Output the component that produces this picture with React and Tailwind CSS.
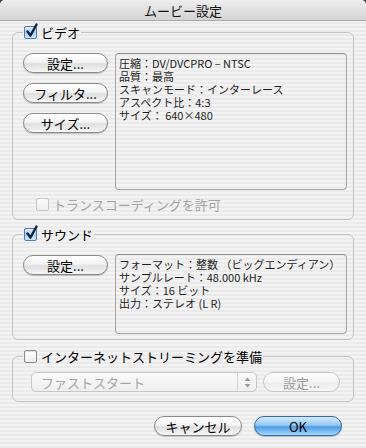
const stripes =
  "bg-[repeating-linear-gradient(180deg,#f3f3f3_0px,#f3f3f3_2px,#eaeaea_2px,#eaeaea_4px)]";

const Check = ({ checked, disabled }) => (
  <span className="relative inline-block w-[13px] h-[13px] shrink-0">
    <span
      className={`absolute inset-0 rounded-[2px] border ${
        checked
          ? "border-[#4d7cb4] bg-[linear-gradient(180deg,#e2effc_0%,#a9cff2_50%,#cfe6fb_100%)]"
          : disabled
          ? "border-[#c6c6c6] bg-[linear-gradient(180deg,#fbfbfb,#eeeeee)]"
          : "border-[#8a8a8a] bg-[linear-gradient(180deg,#ffffff,#ececec)] shadow-[inset_0_1px_1px_rgba(0,0,0,0.15)]"
      }`}
    />
    {checked && (
      <svg
        className="absolute left-[1px] top-[-3px]"
        width="14"
        height="15"
        viewBox="0 0 14 15"
      >
        <path
          d="M2.5 8.5 L5.5 12.5 L11.5 1.5"
          fill="none"
          stroke="#10233f"
          strokeWidth="2.4"
          strokeLinecap="round"
          strokeLinejoin="round"
        />
      </svg>
    )}
  </span>
);

const AquaButton = ({ children, className = "", disabled, primary }) => (
  <button
    className={`h-[20px] rounded-full border text-[13px] leading-none flex items-center justify-center ${
      primary
        ? "border-[#3a6aa3] bg-[linear-gradient(180deg,#d4eafd_0%,#94c8f3_45%,#4c9be5_55%,#a5dafc_100%)] text-black shadow-[0_1px_1px_rgba(0,0,0,0.25)]"
        : disabled
        ? "border-[#c4c4c4] bg-[linear-gradient(180deg,#fdfdfd_0%,#f4f4f4_50%,#ebebeb_55%,#f7f7f7_100%)] text-[#9c9c9c]"
        : "border-[#8a8a8a] bg-[linear-gradient(180deg,#ffffff_0%,#f3f3f3_45%,#dedede_55%,#f6f6f6_100%)] text-black shadow-[0_1px_1px_rgba(0,0,0,0.2)]"
    } ${className}`}
  >
    {children}
  </button>
);

const Legend = ({ checked, children, className = "" }) => (
  <legend className="px-[1px]">
    <span className="flex items-center gap-[4px] h-[14px]">
      <Check checked={checked} />
      <span className={`text-[13px] leading-none text-black ${className}`}>
        {children}
      </span>
    </span>
  </legend>
);

const InfoBox = ({ lines, className = "" }) => (
  <div
    className={`w-[232px] rounded-[4px] border border-[#a4a4a4] border-t-[#8e8e8e] pl-[3px] pt-[3px] text-[11px] leading-[13px] text-[#1e1e1e] ${className}`}
  >
    {lines.map((l) => (
      <div key={l} className="whitespace-nowrap">
        {l}
      </div>
    ))}
  </div>
);

export default function App() {
  return (
    <div className="w-[366px] h-[448px] bg-[#3d463d] font-['Noto_Sans_CJK_JP','Noto_Sans',sans-serif]">
      <div className={`w-full h-full rounded-t-[5px] overflow-hidden ${stripes}`}>
        {/* タイトルバー */}
        <div className="h-[21px] border-b border-[#a9a9a9] bg-[linear-gradient(180deg,#ededed,#d3d3d3)] flex items-center justify-center">
          <span className="text-[13px] leading-none text-[#111]">ムービー設定</span>
        </div>

        {/* ビデオ */}
        <fieldset className="mx-[12px] mt-[4px] border border-[#c3c3c3] rounded-[6px] pl-[10px] pr-[6px] pb-[8px]">
          <Legend checked>ビデオ</Legend>
          <div className="mt-[14px] flex gap-[7px]">
            <div className="w-[85px] flex flex-col gap-[10px]">
              <AquaButton>設定...</AquaButton>
              <AquaButton>フィルタ...</AquaButton>
              <AquaButton>サイズ...</AquaButton>
            </div>
            <InfoBox
              className="h-[137px]"
              lines={[
                "圧縮：DV/DVCPRO – NTSC",
                "品質：最高",
                "スキャンモード：インターレース",
                "アスペクト比：4:3",
                "サイズ： 640×480",
              ]}
            />
          </div>
          <div className="mt-[7px] pl-[13px] h-[14px] flex items-center gap-[4px]">
            <Check disabled />
            <span className="text-[13px] leading-none text-[#a3a3a3]">
              トランスコーディングを許可
            </span>
          </div>
        </fieldset>

        {/* サウンド */}
        <fieldset className="mx-[12px] mt-[7px] border border-[#c3c3c3] rounded-[6px] pl-[10px] pr-[6px] pb-[5px]">
          <Legend checked>サウンド</Legend>
          <div className="mt-[13px] flex items-start gap-[7px]">
            <div className="w-[85px] mt-[1px]">
              <AquaButton className="w-full">設定...</AquaButton>
            </div>
            <InfoBox
              className="h-[80px]"
              lines={[
                "フォーマット：整数 （ビッグエンディアン）",
                "サンプルレート：48.000 kHz",
                "サイズ：16 ビット",
                "出力：ステレオ (L R)",
              ]}
            />
          </div>
        </fieldset>

        {/* ストリーミング */}
        <fieldset className="mx-[12px] mt-[9px] border border-[#c3c3c3] rounded-[6px] pl-[10px] pr-[6px] pb-[9px]">
          <Legend className="text-[12.3px]">インターネットストリーミングを準備</Legend>
          <div className="mt-[9px] pl-[8px] flex items-center gap-[6px]">
            <div className="w-[226px] h-[20px] rounded-[5px] border border-[#c6c6c6] bg-[linear-gradient(180deg,#fafafa,#eeeeee)] flex items-center">
              <span className="flex-1 pl-[9px] text-[13px] leading-none text-[#a6a6a6]">
                ファストスタート
              </span>
              <span className="w-[19px] h-full border-l border-[#d4d4d4] flex items-center justify-center">
                <svg width="7" height="11" viewBox="0 0 7 11">
                  <path d="M3.5 0.5 L6.5 4 L0.5 4 Z" fill="#9a9a9a" />
                  <path d="M3.5 10.5 L6.5 7 L0.5 7 Z" fill="#9a9a9a" />
                </svg>
              </span>
            </div>
            <AquaButton disabled className="w-[77px]">
              設定...
            </AquaButton>
          </div>
        </fieldset>

        {/* ボタン */}
        <div className="mt-[14px] pr-[24px] flex justify-end gap-[12px]">
          <AquaButton className="w-[88px]">キャンセル</AquaButton>
          <AquaButton primary className="w-[88px]">
            OK
          </AquaButton>
        </div>
      </div>
    </div>
  );
}
